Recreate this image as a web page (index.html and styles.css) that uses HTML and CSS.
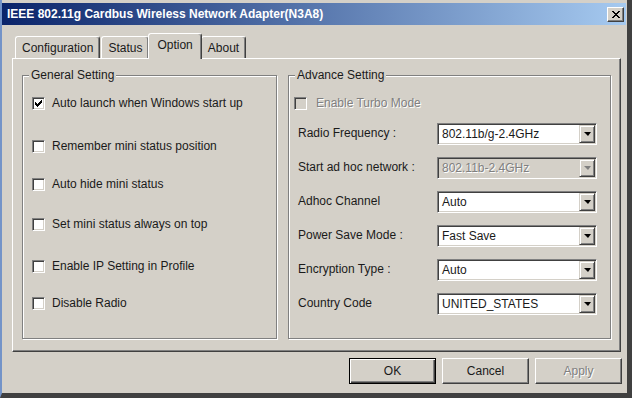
FILE: index.html
```html
<!DOCTYPE html>
<html lang="en">
<head>
    <meta charset="UTF-8">
    <title>IEEE 802.11g Cardbus Wireless Network Adapter(N3A8)</title>
    <link rel="stylesheet" href="styles.css">
</head>
<body>

<div class="window">
    <div class="titlebar">
        <span class="title">IEEE 802.11g Cardbus Wireless Network Adapter(N3A8)</span>
        <button class="close" type="button" aria-label="Close">
            <svg width="8" height="7" viewBox="0 0 8 7" shape-rendering="crispEdges">
                <path d="M0 0h2v1h1v1h2v-1h1v-1h2v1h-1v1h-1v1h-1v1h1v1h1v1h1v1h-2v-1h-1v-1h-2v1h-1v1h-2v-1h1v-1h1v-1h1v-1h-1v-1h-1v-1h-1z" fill="#000"/>
            </svg>
        </button>
    </div>

    <div class="tabs">
        <div class="tab">Configuration</div>
        <div class="tab">Status</div>
        <div class="tab active">Option</div>
        <div class="tab">About</div>
    </div>

    <div class="panel">
        <fieldset class="group general">
            <legend>General Setting</legend>
            <div class="group-body">
                <label class="check-row"><span class="check checked"><svg width="7" height="7" viewBox="0 0 7 7" shape-rendering="crispEdges"><path d="M6 0h1v3h-1v1h-1v1h-1v1h-1v1h-1v-1h-1v-1h-1v-3h1v1h1v1h1v-1h1v-1h1z" fill="#000"/></svg></span>Auto launch when Windows start up</label>
                <label class="check-row"><span class="check"></span>Remember mini status position</label>
                <label class="check-row"><span class="check"></span>Auto hide mini status</label>
                <label class="check-row"><span class="check"></span>Set mini status always on top</label>
                <label class="check-row"><span class="check"></span>Enable IP Setting in Profile</label>
                <label class="check-row"><span class="check"></span>Disable Radio</label>
            </div>
        </fieldset>

        <fieldset class="group advance">
            <legend>Advance Setting</legend>
            <div class="group-body">
                <label class="check-row disabled"><span class="check"></span>Enable Turbo Mode</label>

                <div class="field-row">
                    <span class="field-label">Radio Frequency :</span>
                    <div class="combo"><span class="value">802.11b/g-2.4GHz</span><span class="arrow"><i></i></span></div>
                </div>
                <div class="field-row">
                    <span class="field-label">Start ad hoc network :</span>
                    <div class="combo disabled"><span class="value">802.11b-2.4GHz</span><span class="arrow"><i></i></span></div>
                </div>
                <div class="field-row">
                    <span class="field-label">Adhoc Channel</span>
                    <div class="combo"><span class="value">Auto</span><span class="arrow"><i></i></span></div>
                </div>
                <div class="field-row">
                    <span class="field-label">Power Save Mode :</span>
                    <div class="combo"><span class="value">Fast Save</span><span class="arrow"><i></i></span></div>
                </div>
                <div class="field-row">
                    <span class="field-label">Encryption Type :</span>
                    <div class="combo"><span class="value">Auto</span><span class="arrow"><i></i></span></div>
                </div>
                <div class="field-row">
                    <span class="field-label">Country Code</span>
                    <div class="combo"><span class="value">UNITED_STATES</span><span class="arrow"><i></i></span></div>
                </div>
            </div>
        </fieldset>
    </div>

    <div class="actions">
        <button class="btn default" type="button">OK</button>
        <button class="btn" type="button">Cancel</button>
        <button class="btn" type="button" disabled>Apply</button>
    </div>
</div>

</body>
</html>
```

FILE: styles.css
```css
* {
    box-sizing: border-box;
}
body {
    margin: 0;
    font-family: "Liberation Sans", Arial, sans-serif;
    font-size: 12px;
    color: #1a1a1a;
    background-color: #d4d0c8;
}
.window {
    width: 632px;
    height: 398px;
    display: flex;
    flex-direction: column;
    padding: 3px 1px 0 0;
    background-color: #d4d0c8;
    border-left: 2px solid #7393c8;
    border-right: 5px solid #404040;
    border-bottom: 5px solid #404040;
}

/* title bar */
.titlebar {
    height: 22px;
    display: flex;
    align-items: center;
    justify-content: space-between;
    padding: 0 2px 0 5px;
    background: linear-gradient(to right, #0a246a, #a6caf0);
}
.title {
    color: white;
    font-weight: bold;
    font-size: 12px;
}
.close {
    width: 17px;
    height: 15px;
    padding: 0;
    display: flex;
    align-items: center;
    justify-content: center;
    background-color: #d4d0c8;
    border: 1px solid;
    border-color: #fff #404040 #404040 #fff;
    box-shadow: inset -1px -1px 0 #808080;
}

/* tabs */
.tabs {
    height: 25px;
    display: flex;
    align-items: flex-end;
    margin: 8px 0 0 13px;
}
.tab {
    height: 22px;
    display: flex;
    align-items: center;
    padding: 0 6px;
    margin-right: 1px;
    border: 1px solid;
    border-bottom: none;
    border-color: #fff #404040 transparent #fff;
    border-radius: 3px 3px 0 0;
    box-shadow: inset -1px 0 0 #808080;
}
.tab.active {
    position: relative;
    height: 26px;
    margin: 0 -1px -1px -2px;
    padding: 0 8px 3px;
    background-color: #d4d0c8;
}

/* tab panel */
.panel {
    height: 294px;
    margin: 0 5px 0 10px;
    display: flex;
    gap: 11px;
    padding: 10px 9px 12px;
    border: 1px solid;
    border-color: #fff #404040 #404040 #fff;
    box-shadow: inset -1px -1px 0 #808080;
}
.group {
    margin: 0;
    padding: 0;
    min-width: 0;
    border: 1px solid #808080;
    box-shadow: 1px 1px 0 #fff, inset 1px 1px 0 #fff;
}
.group legend {
    margin-left: 6px;
    padding: 0 2px;
    line-height: 13px;
    background-color: #d4d0c8;
}
.general {
    flex: 0 0 255px;
}
.advance {
    flex: 1;
}
.group-body {
    display: flex;
    flex-direction: column;
    padding-top: 13px;
}
.general .group-body {
    gap: 24px;
    padding-left: 9px;
}
.general .check-row:nth-child(2) {
    margin-top: 3px;
}
.general .check-row:nth-child(3) {
    margin-top: -2px;
}
.general .check-row:nth-child(5) {
    margin-top: 2px;
}
.general .check-row:nth-child(6) {
    margin-top: -3px;
}
.advance .group-body {
    gap: 12px;
    padding-left: 5px;
}

/* checkboxes */
.check-row {
    height: 16px;
    display: flex;
    align-items: center;
    gap: 7px;
}
.check {
    width: 13px;
    height: 13px;
    display: flex;
    align-items: center;
    justify-content: center;
    background-color: white;
    border: 1px solid;
    border-color: #808080 #fff #fff #808080;
    box-shadow: inset 1px 1px 0 #404040, inset -1px -1px 0 #d4d0c8;
}
.check-row.disabled {
    color: #808080;
    text-shadow: 1px 1px 0 #fff;
    gap: 9px;
}
.check-row.disabled .check {
    background-color: #d4d0c8;
}

/* combo rows */
.field-row {
    height: 22px;
    display: flex;
    align-items: center;
    padding-left: 4px;
}
.field-label {
    width: 139px;
    padding-bottom: 2px;
}
.combo {
    width: 160px;
    height: 22px;
    display: flex;
    align-items: center;
    padding: 1px;
    background-color: white;
    border: 1px solid;
    border-color: #808080 #fff #fff #808080;
    box-shadow: inset 1px 1px 0 #404040, inset -1px -1px 0 #d4d0c8;
}
.combo .value {
    flex: 1;
    padding-left: 3px;
}
.combo .arrow {
    width: 16px;
    height: 18px;
    display: flex;
    align-items: center;
    justify-content: center;
    background-color: #d4d0c8;
    border: 1px solid;
    border-color: #d4d0c8 #404040 #404040 #d4d0c8;
    box-shadow: inset 1px 1px 0 #fff, inset -1px -1px 0 #808080;
}
.combo .arrow i {
    width: 0;
    height: 0;
    border-left: 4px solid transparent;
    border-right: 3px solid transparent;
    border-top: 4px solid #000;
}
.combo.disabled {
    background-color: #d4d0c8;
    color: #808080;
}
.combo.disabled .value {
    text-shadow: 1px 1px 0 #fff;
}
.combo.disabled .arrow i {
    border-top-color: #808080;
}

/* buttons */
.actions {
    display: flex;
    justify-content: flex-end;
    gap: 6px;
    margin-top: 6px;
    padding-right: 4px;
}
.btn {
    width: 87px;
    height: 26px;
    font-family: inherit;
    font-size: 12px;
    color: #1a1a1a;
    background-color: #d4d0c8;
    border: 1px solid;
    border-color: #fff #404040 #404040 #fff;
    box-shadow: inset -1px -1px 0 #808080;
}
.btn.default {
    border-color: #000;
    box-shadow: inset 1px 1px 0 #fff, inset -1px -1px 0 #404040, inset -2px -2px 0 #808080;
}
.btn:disabled {
    color: #808080;
    text-shadow: 1px 1px 0 #fff;
}
```
